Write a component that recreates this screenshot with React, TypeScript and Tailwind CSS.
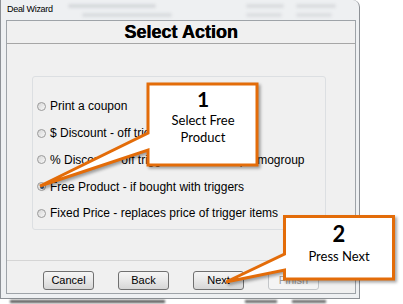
const ui = { fontFamily: '"Liberation Sans", Arial, sans-serif' };
const callout = { fontFamily: 'Lato, "Open Sans", sans-serif' };

const options = [
  { label: 'Print a coupon', checked: false },
  { label: '$ Discount - off trigger items', checked: false },
  { label: '% Discount - off trigger items, or its promogroup', checked: false },
  { label: 'Free Product - if bought with triggers', checked: true },
  { label: 'Fixed Price - replaces price of trigger items', checked: false },
];

function Radio({ checked }: { checked: boolean }) {
  return (
    <span className="flex h-[9px] w-[9px] shrink-0 items-center justify-center rounded-full border border-[#9a9a9a] bg-linear-to-br from-[#d6d6d6] to-[#f8f8f8]">
      {checked && <span className="h-[4px] w-[4px] rounded-full bg-[#2b4f7a]" />}
    </span>
  );
}

function Button({ label, disabled }: { label: string; disabled?: boolean }) {
  return (
    <div
      className={
        disabled
          ? 'flex h-[19px] w-[51px] items-center justify-center rounded-[3px] border border-[#c3c6c9] bg-[#f4f4f4] text-[11px] text-[#9a9a9a]'
          : 'flex h-[19px] w-[51px] items-center justify-center rounded-[3px] border border-[#707070] bg-linear-to-b from-[#f5f5f5] via-[#e8e8e8] to-[#d6d6d6] text-[11px] text-black'
      }
    >
      {label}
    </div>
  );
}

export default function App() {
  return (
    <div className="relative flex h-[304px] w-[403px] flex-col overflow-hidden bg-white" style={ui}>
      {/* wizard window */}
      <div className="flex h-[299px] w-[360px] shrink-0 flex-col rounded-tr-[7px] border border-t-0 border-[#8d9196] bg-[#eef0f2] pb-[4px] pl-[5px] pr-[3px]">
        <div className="relative flex h-[20px] items-center pl-[1px]">
          <span className="absolute left-[62px] top-[4px] h-[4px] w-[88px] rounded-full bg-[#d6d9dc] blur-[1.5px]" />
          <span className="absolute left-[76px] top-[13px] h-[4px] w-[90px] rounded-full bg-[#d9dcdf] blur-[1.5px]" />
          <span className="absolute left-[240px] top-[4px] h-[4px] w-[38px] rounded-full bg-[#dadcdf] blur-[1.5px]" />
          <span className="absolute left-[290px] top-[4px] h-[4px] w-[40px] rounded-full bg-[#dadcdf] blur-[1.5px]" />
          <span className="absolute left-[240px] top-[13px] h-[4px] w-[36px] rounded-full bg-[#dcdee1] blur-[1.5px]" />
          <span className="absolute left-[290px] top-[13px] h-[4px] w-[36px] rounded-full bg-[#dcdee1] blur-[1.5px]" />
          <span className="relative text-[9px] tracking-[-0.3px] text-black">Deal Wizard</span>
        </div>

        <div className="flex flex-1 flex-col border border-[#9ea3a8] bg-[#f0f0f0]">
          <div className="flex h-[23px] shrink-0 items-center justify-center border-b border-[#a6a6a6] bg-[#f0f0f0]">
            <span className="text-[18px] font-bold leading-none text-black [text-shadow:0.5px_0_0_#000]">Select Action</span>
          </div>

          <div className="flex-1 pl-[25px] pr-[29px] pt-[32px]">
            <div className="flex h-[154px] flex-col rounded-[3px] border border-[#dcdfe2] pl-[4px] pt-[16px]">
              {options.map((o) => (
                <div key={o.label} className="flex h-[26.75px] items-center gap-[4px]">
                  <Radio checked={o.checked} />
                  <span className="whitespace-nowrap text-[12px] text-black">{o.label}</span>
                </div>
              ))}
            </div>
          </div>

          <div className="flex h-[33px] shrink-0 gap-[24px] border-t border-[#d5d5d5] pl-[36px] pt-[10px]">
            <Button label="Cancel" />
            <Button label="Back" />
            <Button label="Next" />
            <Button label="Finish" disabled />
          </div>
        </div>
      </div>

      {/* blurred desktop text below the window */}
      <div className="relative h-[5px]">
        <span className="absolute left-[10px] top-[1px] h-[3px] w-[155px] bg-[#5a5a5a] blur-[1px]" />
        <span className="absolute left-[245px] top-[1px] h-[3px] w-[32px] bg-[#6a6a6a] blur-[1px]" />
        <span className="absolute left-[292px] top-[1px] h-[3px] w-[34px] bg-[#6a6a6a] blur-[1px]" />
      </div>

      {/* callouts */}
      <svg className="absolute left-0 top-0 drop-shadow-[2px_2px_1.5px_rgba(0,0,0,0.35)]" width="403" height="304">
        <path
          d="M148,84 H257 V165 H148 V150 L40,186 L148,133 Z"
          fill="white"
          stroke="#e36c09"
          strokeWidth="3"
          strokeLinejoin="miter"
        />
        <path
          d="M284.5,216.5 H393.5 V279 H284.5 V270 L226,282 L284.5,254 Z"
          fill="white"
          stroke="#e36c09"
          strokeWidth="3"
          strokeLinejoin="miter"
        />
      </svg>

      <div className="absolute left-[150px] top-[86px] flex w-[106px] flex-col items-center text-black" style={callout}>
        <span className="text-[21px] font-bold leading-[26px]">1</span>
        <span className="text-[13px] leading-[17px]">Select Free</span>
        <span className="text-[13px] leading-[17px]">Product</span>
      </div>

      <div className="absolute left-[286px] top-[220px] flex w-[106px] flex-col items-center text-black" style={callout}>
        <span className="text-[22px] font-bold leading-[28px]">2</span>
        <span className="text-[13px] leading-[17px]">Press Next</span>
      </div>
    </div>
  );
}
